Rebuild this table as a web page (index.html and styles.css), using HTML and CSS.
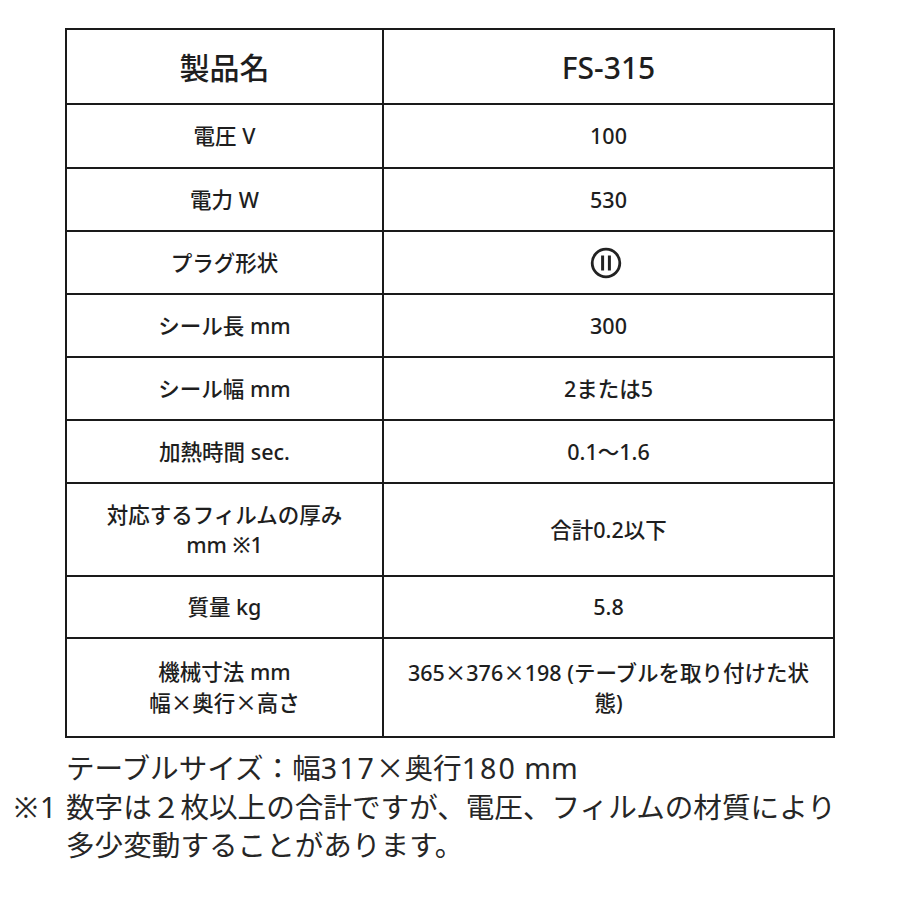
FILE: index.html
```html
<!DOCTYPE html>
<html lang="ja">
<head>
<meta charset="utf-8">
<title>FS-315 仕様</title>
<link rel="stylesheet" href="styles.css">
</head>
<body>
<div class="page">
  <table class="spec">
    <tr class="head">
      <th>製品名</th>
      <th>FS-315</th>
    </tr>
    <tr class="r64"><td>電圧 V</td><td>100</td></tr>
    <tr class="r63"><td>電力 W</td><td>530</td></tr>
    <tr class="r63"><td>プラグ形状</td><td>
      <svg class="plug" width="32" height="32" viewBox="0 0 32 32" aria-hidden="true">
        <circle cx="16" cy="16" r="13.8" fill="none" stroke="#222" stroke-width="2.8"/>
        <line x1="12.6" y1="8.5" x2="12.6" y2="23.5" stroke="#222" stroke-width="3"/>
        <line x1="19.4" y1="8.5" x2="19.4" y2="23.5" stroke="#222" stroke-width="3"/>
      </svg>
    </td></tr>
    <tr class="r63"><td>シール長 mm</td><td>300</td></tr>
    <tr class="r63"><td>シール幅 mm</td><td>2または5</td></tr>
    <tr class="r63"><td>加熱時間 sec.</td><td>0.1～1.6</td></tr>
    <tr class="r93"><td>対応するフィルムの厚み<br>mm ※1</td><td>合計0.2以下</td></tr>
    <tr class="r62"><td>質量 kg</td><td>5.8</td></tr>
    <tr class="r99"><td>機械寸法 mm<br>幅<span class="cjk">×</span>奥行<span class="cjk">×</span>高さ</td><td>365<span class="cjk">×</span>376<span class="cjk">×</span>198 (テーブルを取り付けた状<br>態)</td></tr>
  </table>
  <div class="notes">
    <p class="note-line">テーブルサイズ：幅<span class="wide">317</span><span class="cjk">×</span>奥行<span class="wide">180</span> mm</p>
    <div class="note">
      <span class="mark">※1</span>
      <p class="note-text">数字は２枚以上の合計ですが、電圧、フィルムの材質により<br>多少変動することがあります。</p>
    </div>
  </div>
</div>
</body>
</html>
```
FILE: styles.css
```css
html, body {
  margin: 0;
  padding: 0;
  background: #fff;
}
body {
  font-family: "Noto Sans", "Noto Sans CJK JP", sans-serif;
  color: #1e1e1e;
}
.cjk {
  font-family: "Noto Sans CJK JP", sans-serif;
}
.page {
  padding: 28px 0 0 65px;
  width: 770px;
}
.spec {
  border-collapse: collapse;
  width: 770px;
  table-layout: fixed;
  border: 2px solid #1a1a1a;
}
.spec th, .spec td {
  border: 2px solid #1a1a1a;
  text-align: center;
  vertical-align: middle;
  padding: 0 10px;
  font-size: 21.5px;
  font-weight: 500;
  line-height: 30px;
}
.spec th:first-child, .spec td:first-child {
  width: 295px;
}
.spec .head th {
  font-size: 30px;
  font-weight: 500;
  height: 71px;
  padding-top: 2px;
}
.r64 td { height: 62px; }
.r63 td { height: 61px; }
.r62 td { height: 60px; }
.r93 td { height: 91px; }
.r99 td { height: 97px; }
.plug {
  display: block;
  margin: 0 auto;
  position: relative;
  left: -3px;
}
.notes {
  margin-top: 10px;
  color: #262626;
  font-size: 28.6px;
  line-height: 38.5px;
}
.note-line {
  margin: 0;
  padding-left: 1px;
}
.wide {
  letter-spacing: 2px;
}
.note {
  display: flex;
  margin-left: -51px;
  width: 880px;
}
.mark {
  flex: 0 0 52px;
  letter-spacing: 2px;
  white-space: nowrap;
}
.note-text {
  margin: 0;
  flex: 0 0 800px;
}
```
